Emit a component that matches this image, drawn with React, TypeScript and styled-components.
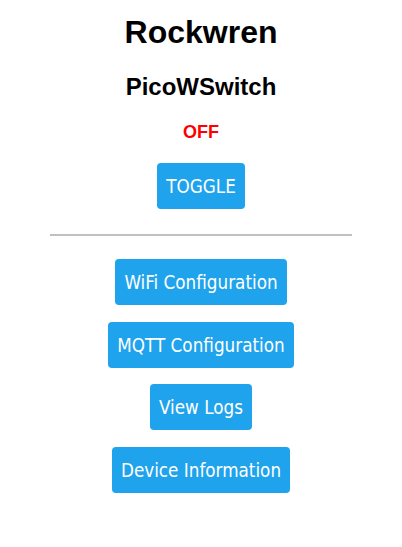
import React from "react";
import styled, { createGlobalStyle } from "styled-components";

const GlobalStyle = createGlobalStyle`
  body {
    margin: 0;
    background: #fff;
    font-family: "Liberation Sans", Arial, sans-serif;
  }
`;

const Page = styled.div`
  display: flex;
  flex-direction: column;
  align-items: center;
  padding-top: 14px;
`;

const Title = styled.h1`
  margin: 0;
  font-size: 32px;
  line-height: 37px;
  font-weight: bold;
  color: #000;
`;

const Subtitle = styled.h2`
  margin: 22px 0 0;
  font-size: 24px;
  line-height: 28px;
  font-weight: bold;
  color: #000;
`;

const State = styled.div<{ $on: boolean }>`
  margin-top: 21px;
  font-size: 18px;
  line-height: 21px;
  font-weight: bold;
  color: ${(p) => (p.$on ? "#00b000" : "#ff0000")};
`;

const Button = styled.button<{ $top: number }>`
  margin-top: ${(p) => p.$top}px;
  height: 46px;
  padding: 1px 9px 0;
  border: none;
  border-radius: 4px;
  background: #1fa3ec;
  color: #fff;
  font-family: "DejaVu Sans Condensed", "DejaVu Sans", sans-serif;
  font-size: 18.7px;
  cursor: pointer;
`;

const Rule = styled.hr`
  width: 75%;
  height: 2px;
  margin: 25px 0 0;
  border: none;
  background: #c0c0c0;
`;

const Menu = styled.div`
  display: flex;
  flex-direction: column;
  align-items: center;
  gap: 16.5px;
  margin-top: 23px;
`;

export default function App() {
  return (
    <Page>
      <GlobalStyle />
      <Title>Rockwren</Title>
      <Subtitle>PicoWSwitch</Subtitle>
      <State $on={false}>OFF</State>
      <Button $top={20}>TOGGLE</Button>
      <Rule />
      <Menu>
        <Button $top={0}>WiFi Configuration</Button>
        <Button $top={0}>MQTT Configuration</Button>
        <Button $top={0}>View Logs</Button>
        <Button $top={0}>Device Information</Button>
      </Menu>
    </Page>
  );
}
